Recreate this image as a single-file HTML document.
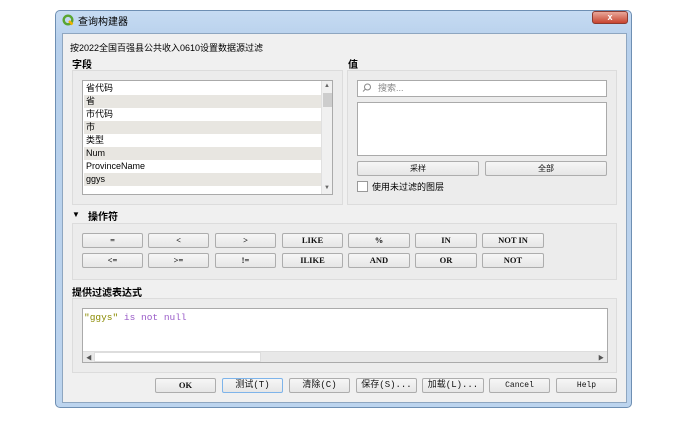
<!DOCTYPE html>
<html><head><meta charset="utf-8"><style>
*{box-sizing:border-box;margin:0;padding:0}
body{width:677px;height:423px;background:#fff;position:relative;overflow:hidden;font-family:"Liberation Sans","Noto Sans CJK SC",sans-serif;font-size:9px;color:#000}
.a{position:absolute}
.win{left:55px;top:10px;width:577px;height:398px;border:1px solid #6e8fb3;border-radius:5px;background:linear-gradient(#c6dbf2,#b7d0ec 30px,#bcd4ee);}
.client{left:62px;top:33px;width:565px;height:370px;background:#f0f0f0;border:1px solid #8ea6c0}
.gb{border:1px solid #dcdcdc;background:#ececec}
.btn{position:absolute;height:15px;border:1px solid #adadad;border-radius:2px;background:linear-gradient(#f6f6f6,#e6e6e6);text-align:center;line-height:13px;font-family:"Liberation Mono","Noto Sans CJK SC",monospace;font-size:8px;color:#111}
.bb{font-weight:bold;font-family:"Liberation Serif","Noto Sans CJK SC",serif;font-size:8.5px}
.lb{font-weight:bold;font-size:10px}
.row{position:absolute;left:1px;width:238px;height:13px;line-height:13px;padding-left:2px;font-size:9px}
.g{background:#e8e6e1}
</style></head><body>
<div class="a win"></div>
<svg class="a" style="left:62px;top:14px" width="12" height="12" viewBox="0 0 12 12"><circle cx="6" cy="6" r="4.3" fill="none" stroke="#59a530" stroke-width="2.4"/><path d="M7 7l3.5 3.5" stroke="#f0b000" stroke-width="2.4"/></svg>
<div class="a" style="left:78px;top:13px;font-size:10px">查询构建器</div>
<div class="a" style="left:592px;top:11px;width:36px;height:13px;border:1px solid #8c3b30;border-radius:3px;background:linear-gradient(#e8a89a,#c8442f);color:#fff;text-align:center;font-size:9px;line-height:11px;font-weight:bold">x</div>
<div class="a client"></div>
<div class="a" style="left:70px;top:41px;font-size:9px">按2022全国百强县公共收入0610设置数据源过滤</div>
<div class="a lb" style="left:72px;top:56px">字段</div>
<div class="a gb" style="left:72px;top:70px;width:271px;height:135px"></div>
<div class="a" style="left:82px;top:80px;width:251px;height:115px;border:1px solid #aaa;background:#fff">
<div class="row" style="top:1px">省代码</div><div class="row g" style="top:14px">省</div><div class="row" style="top:27px">市代码</div><div class="row g" style="top:40px">市</div><div class="row" style="top:53px">类型</div><div class="row g" style="top:66px">Num</div><div class="row" style="top:79px">ProvinceName</div><div class="row g" style="top:92px">ggys</div>
<div class="a" style="left:238px;top:0;width:11px;height:113px;background:#f0f0f0;border-left:1px solid #e0e0e0"><div class="a" style="left:1px;top:12px;width:9px;height:14px;background:#cdcdcd"></div><div class="a" style="left:2px;top:2px;font-size:6px;color:#666">▲</div><div class="a" style="left:2px;top:104px;font-size:6px;color:#666">▼</div></div>
</div>
<div class="a lb" style="left:348px;top:56px">值</div>
<div class="a gb" style="left:347px;top:70px;width:270px;height:135px"></div>
<div class="a" style="left:357px;top:80px;width:250px;height:17px;border:1px solid #aaa;background:#fff;color:#888;padding-left:20px;line-height:15px">搜索...</div>
<svg class="a" style="left:362px;top:83px" width="10" height="10" viewBox="0 0 10 10"><circle cx="5.5" cy="4" r="3" fill="none" stroke="#888"/><path d="M3.3 6.2L1 8.5" stroke="#888"/></svg>
<div class="a" style="left:357px;top:102px;width:250px;height:54px;border:1px solid #aaa;background:#fff"></div>
<div class="btn" style="left:357px;top:161px;width:122px;font-family:'Noto Sans CJK SC'">采样</div>
<div class="btn" style="left:485px;top:161px;width:122px;font-family:'Noto Sans CJK SC'">全部</div>
<div class="a" style="left:357px;top:181px;width:11px;height:11px;border:1px solid #999;background:#fff"></div>
<div class="a" style="left:372px;top:180px">使用未过滤的图层</div>
<div class="a" style="left:72px;top:210px;font-size:8px">▼</div>
<div class="a lb" style="left:88px;top:208px">操作符</div>
<div class="a gb" style="left:72px;top:223px;width:545px;height:57px"></div>
<div class="btn bb" style="left:82px;top:233px;width:61px">=</div>
<div class="btn bb" style="left:148px;top:233px;width:61px">&lt;</div>
<div class="btn bb" style="left:215px;top:233px;width:61px">&gt;</div>
<div class="btn bb" style="left:282px;top:233px;width:61px">LIKE</div>
<div class="btn bb" style="left:348px;top:233px;width:62px">%</div>
<div class="btn bb" style="left:415px;top:233px;width:62px">IN</div>
<div class="btn bb" style="left:482px;top:233px;width:62px">NOT IN</div>
<div class="btn bb" style="left:82px;top:253px;width:61px">&lt;=</div>
<div class="btn bb" style="left:148px;top:253px;width:61px">&gt;=</div>
<div class="btn bb" style="left:215px;top:253px;width:61px">!=</div>
<div class="btn bb" style="left:282px;top:253px;width:61px">ILIKE</div>
<div class="btn bb" style="left:348px;top:253px;width:62px">AND</div>
<div class="btn bb" style="left:415px;top:253px;width:62px">OR</div>
<div class="btn bb" style="left:482px;top:253px;width:62px">NOT</div>
<div class="a lb" style="left:72px;top:284px">提供过滤表达式</div>
<div class="a gb" style="left:72px;top:298px;width:545px;height:75px"></div>
<div class="a" style="left:82px;top:308px;width:526px;height:55px;border:1px solid #aaa;background:#fff">
<div class="a" style="left:1px;top:3px;font-family:'Liberation Mono',monospace;font-size:9.5px"><span style="color:#8a8a00">"ggys"</span> <span style="color:#9a5cc8">is not null</span></div>
<div class="a" style="left:0;top:42px;width:524px;height:11px;background:#e8e8e8;border-top:1px solid #ddd"><div class="a" style="left:11px;top:0;width:167px;height:10px;background:#fff;border:1px solid #ddd"></div><div class="a" style="left:3px;top:1px;font-size:6px;color:#555">◀</div><div class="a" style="left:515px;top:1px;font-size:6px;color:#555">▶</div></div>
</div>
<div class="btn bb" style="left:155px;top:378px;width:61px">OK</div>
<div class="btn" style="left:222px;top:378px;width:61px;border-color:#7eb4ea;font-size:9px">测试(T)</div>
<div class="btn" style="left:289px;top:378px;width:61px;font-size:9px">清除(C)</div>
<div class="btn" style="left:356px;top:378px;width:61px;font-size:9px">保存(S)...</div>
<div class="btn" style="left:422px;top:378px;width:62px;font-size:9px">加载(L)...</div>
<div class="btn" style="left:489px;top:378px;width:61px">Cancel</div>
<div class="btn" style="left:556px;top:378px;width:61px">Help</div>
</body></html>
